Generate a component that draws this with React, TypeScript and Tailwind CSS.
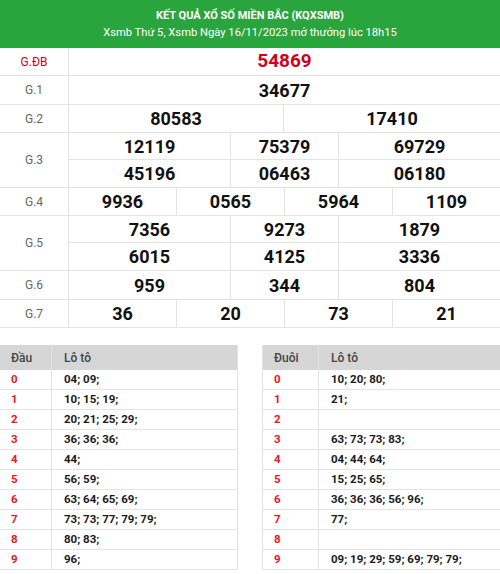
import React from 'react';

// KQXSMB result board: prize grid + đầu/đuôi lô tô tables.

const LINE = 'border-[#e3e3e3]';

type Cell = { v: string; w: string };

const Q = 'w-[108px]';
const W3A = 'w-[162px]';
const W3B = 'w-[108px]';
const W3C = 'flex-1';

function row(values: string[], widths: string[]): Cell[] {
  return values.map((v, i) => ({ v, w: widths[i] }));
}

const PRIZES: { label: string; rows: Cell[][]; red?: boolean; h?: string }[] = [
  { label: 'G.ĐB', red: true, rows: [row(['54869'], ['flex-1'])] },
  { label: 'G.1', h: 'h-[28px]', rows: [row(['34677'], ['flex-1'])] },
  { label: 'G.2', rows: [row(['80583', '17410'], ['w-[215px]', 'flex-1'])] },
  {
    label: 'G.3',
    rows: [
      row(['12119', '75379', '69729'], [W3A, W3B, W3C]),
      row(['45196', '06463', '06180'], [W3A, W3B, W3C]),
    ],
  },
  { label: 'G.4', rows: [row(['9936', '0565', '5964', '1109'], [Q, Q, Q, 'flex-1'])] },
  {
    label: 'G.5',
    rows: [
      row(['7356', '9273', '1879'], [W3A, W3B, W3C]),
      row(['6015', '4125', '3336'], [W3A, W3B, W3C]),
    ],
  },
  { label: 'G.6', h: 'h-[28px]', rows: [row(['959', '344', '804'], [W3A, W3B, W3C])] },
  { label: 'G.7', rows: [row(['36', '20', '73', '21'], [Q, Q, Q, 'flex-1'])] },
];

const DAU = [
  '04; 09;',
  '10; 15; 19;',
  '20; 21; 25; 29;',
  '36; 36; 36;',
  '44;',
  '56; 59;',
  '63; 64; 65; 69;',
  '73; 73; 77; 79; 79;',
  '80; 83;',
  '96;',
];

const DUOI = [
  '10; 20; 80;',
  '21;',
  '',
  '63; 73; 73; 83;',
  '04; 44; 64;',
  '15; 25; 65;',
  '36; 36; 36; 56; 96;',
  '77;',
  '',
  '09; 19; 29; 59; 69; 79; 79;',
];

function PrizeRow({ label, rows, red, h }: { label: string; rows: Cell[][]; red?: boolean; h?: string }) {
  return (
    <div className={`flex border-b ${LINE}`}>
      <div
        className={`flex w-[69px] shrink-0 items-center justify-center border-r ${LINE} text-[12px] ${
          red ? 'text-[#d0021b]' : 'text-[#666]'
        }`}
      >
        {label}
      </div>
      <div className="flex flex-1 flex-col">
        {rows.map((cells, ri) => (
          <div key={ri} className={`flex ${h ?? 'h-[27px]'} ${ri < rows.length - 1 ? `border-b ${LINE}` : ''}`}>
            {cells.map((c, ci) => (
              <div
                key={ci}
                className={`${c.w} flex items-center justify-center text-[18px] font-bold ${
                  ci < cells.length - 1 ? `border-r ${LINE}` : ''
                } ${red ? 'text-[#d0021b] text-[19px]' : 'text-[#111]'}`}
              >
                {c.v}
              </div>
            ))}
          </div>
        ))}
      </div>
    </div>
  );
}

function LotoTable({ head, items, firstCol, className }: { head: string; items: string[]; firstCol: string; className: string }) {
  return (
    <div className={className}>
      <div className="flex h-[25px] items-center bg-[#d6d6d6] text-[12px] font-medium text-[#444]">
        <div className={`${firstCol} h-full flex items-center pl-[11px] border-r border-[#e4e4e4]`}>{head}</div>
        <div className="pl-[12px]">Lô tô</div>
      </div>
      {items.map((t, i) => (
        <div key={i} className={`flex h-[20px] items-center border-b ${LINE} text-[11.5px] font-bold`}>
          <div className={`${firstCol} h-full flex items-center pl-[11px] border-r ${LINE} text-[#f0141e]`}>{i}</div>
          <div className="pl-[12px] text-[#1a1a1a]">{t}</div>
        </div>
      ))}
    </div>
  );
}

export default function App() {
  return (
    <div className="h-[574px] w-[500px] overflow-hidden bg-white font-['Roboto','Liberation_Sans',sans-serif]">
      <div className="flex h-[48px] flex-col items-center justify-center bg-[#2aa43c] pb-[1px] text-white">
        <div className="text-[11px] font-bold leading-[17px]">KẾT QUẢ XỔ SỐ MIỀN BẮC (KQXSMB)</div>
        <div className="text-[11.2px] leading-[17px]">Xsmb Thứ 5, Xsmb Ngày 16/11/2023 mở thưởng lúc 18h15</div>
      </div>
      <div>
        {PRIZES.map((p) => (
          <PrizeRow key={p.label} {...p} />
        ))}
      </div>
      <div className="mt-[17px] flex justify-between">
        <LotoTable head="Đầu" items={DAU} firstCol="w-[52px]" className={`w-[238px] border-r ${LINE}`} />
        <LotoTable head="Đuôi" items={DUOI} firstCol="w-[56px]" className={`w-[238px] border-l ${LINE}`} />
      </div>
    </div>
  );
}
